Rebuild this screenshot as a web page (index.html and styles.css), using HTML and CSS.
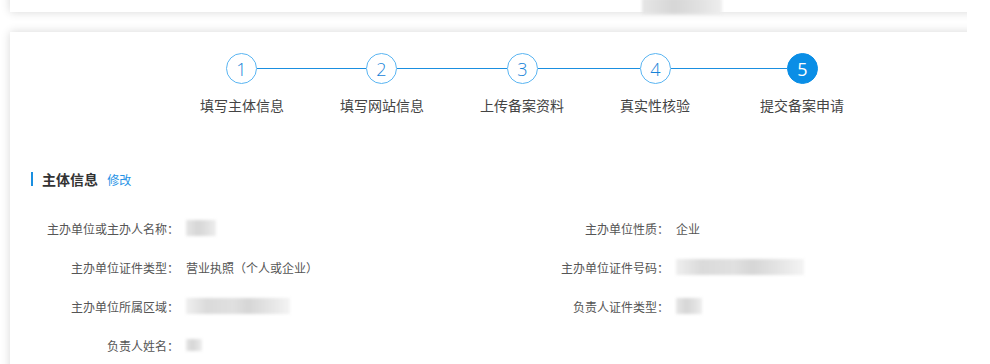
FILE: index.html
```html
<!DOCTYPE html>
<html lang="zh">

<head>
	<meta charset="utf-8">
	<meta name="viewport" content="width=device-width, initial-scale=1.0">
	<title>备案申请</title>
	<link rel="stylesheet" href="styles.css">
</head>

<body>
	<div class="page">
		<div class="card card_top">
			<span class="blur blur_top"></span>
		</div>

		<div class="card card_main">
			<!-- 步骤条 -->
			<div class="step_circles">
				<span class="circle">1</span>
				<span class="line line_1"></span>
				<span class="circle">2</span>
				<span class="line line_2"></span>
				<span class="circle">3</span>
				<span class="line line_3"></span>
				<span class="circle">4</span>
				<span class="line line_4"></span>
				<span class="circle active">5</span>
			</div>
			<div class="step_labels">
				<span>填写主体信息</span>
				<span>填写网站信息</span>
				<span>上传备案资料</span>
				<span>真实性核验</span>
				<span>提交备案申请</span>
			</div>

			<!-- 主体信息 -->
			<h3 class="section_title">主体信息 <a href="#">修改</a></h3>

			<div class="info_grid">
				<div class="info_row">
					<span class="label">主办单位或主办人名称：</span>
					<span class="blur" style="width: 30px"></span>
				</div>
				<div class="info_row">
					<span class="label">主办单位性质：</span>
					<span class="value">企业</span>
				</div>
				<div class="info_row">
					<span class="label">主办单位证件类型：</span>
					<span class="value">营业执照（个人或企业）</span>
				</div>
				<div class="info_row">
					<span class="label">主办单位证件号码：</span>
					<span class="blur wide" style="width: 128px"></span>
				</div>
				<div class="info_row">
					<span class="label">主办单位所属区域：</span>
					<span class="blur wide" style="width: 104px"></span>
				</div>
				<div class="info_row">
					<span class="label">负责人证件类型：</span>
					<span class="blur" style="width: 26px"></span>
				</div>
				<div class="info_row">
					<span class="label">负责人姓名：</span>
					<span class="blur small" style="width: 16px"></span>
				</div>
			</div>
		</div>
	</div>
</body>

</html>
```

FILE: styles.css
```css
* {
	margin: 0;
	padding: 0;
	box-sizing: border-box;
}

body {
	background: #fff;
	font-family: "Noto Sans CJK SC", "Noto Sans", sans-serif;
	color: #555;
	font-size: 12px;
}

.page {
	width: 967px;
	height: 364px;
	overflow: hidden;
	padding-left: 10px;
}

.card {
	background: #fff;
	margin-right: -40px;
	box-shadow: 0 0 9px rgba(0, 0, 0, 0.16);
}

.card_top {
	margin-top: -20px;
	padding-top: 20px;
	padding-left: 632px;
	height: 32px;
}

.blur_top {
	display: block;
	width: 80px;
	height: 3px;
	margin-top: -4px;
	background: #f2f2f2;
	filter: blur(2px);
}

.card_main {
	margin-top: 20px;
	height: 400px;
	padding-top: 21px;
}

/* steps */
.step_circles {
	display: flex;
	align-items: center;
	padding-left: 216px;
}

.circle {
	width: 31px;
	height: 31px;
	border: 1.5px solid #5ab5f2;
	border-radius: 50%;
	display: flex;
	align-items: center;
	justify-content: center;
	color: #1683d8;
	font-family: "Open Sans", sans-serif;
	font-size: 18px;
	font-weight: 300;
	line-height: 1;
}

.circle.active {
	background: #0a8ee6;
	border-color: #0a8ee6;
	color: #fff;
	font-weight: 400;
}

.line {
	height: 1px;
	background: #1a8fe0;
}

.line_1 {
	width: 109px;
}

.line_2 {
	width: 110px;
}

.line_3 {
	width: 102px;
}

.line_4 {
	width: 116px;
}

.step_labels {
	display: flex;
	padding-left: 190px;
	margin-top: 11px;
	font-size: 14px;
	line-height: 20px;
	color: #444;
}

.step_labels span {
	width: 140px;
}

/* section */
.section_title {
	margin: 57px 0 0 21px;
	padding-left: 9px;
	border-left: 2px solid #1a8fe0;
	font-size: 14px;
	line-height: 14px;
	height: 14px;
	color: #333;
}

.section_title a {
	font-size: 12px;
	font-weight: normal;
	color: #2693e6;
	text-decoration: none;
	margin-left: 6px;
}

.info_grid {
	display: grid;
	grid-template-columns: 490px 1fr;
	row-gap: 19px;
	padding-left: 37px;
	margin-top: 32px;
}

.info_row {
	display: flex;
	align-items: center;
	height: 20px;
}

.label {
	flex-shrink: 0;
	width: 132px;
	white-space: nowrap;
	text-align: right;
	margin-right: 7px;
	color: #555;
}

.value {
	color: #555;
}

.blur {
	display: inline-block;
	height: 16px;
	background: linear-gradient(90deg, #e6e6e6, #d6d6d6 40%, #e0e0e0 70%, #eeeeee);
	filter: blur(1.5px);
}

.blur.wide {
	background: linear-gradient(90deg, #efefef, #dadada 20%, #e0e0e0 45%, #d6d6d6 60%, #e8e8e8 85%, #f4f4f4);
}

.blur.small {
	height: 12px;
}
```
